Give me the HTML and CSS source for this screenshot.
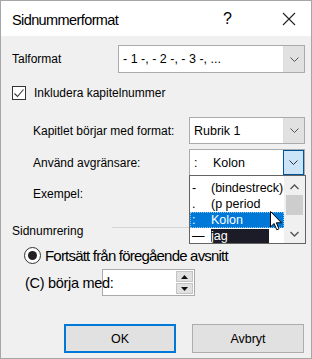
FILE: index.html
```html
<!DOCTYPE html>
<html lang="sv">
<head>
    <meta charset="UTF-8">
    <title>Sidnummerformat</title>
    <link rel="stylesheet" href="styles.css">
</head>
<body>
    <div class="dialog">
        <div class="titlebar">
            <span class="title">Sidnummerformat</span>
            <span class="help">?</span>
            <svg class="close" width="14" height="14" viewBox="0 0 14 14"><path d="M1 1 L13 13 M13 1 L1 13" stroke="#222" stroke-width="1.1" fill="none"/></svg>
        </div>

        <div class="content">
            <div class="row row-talformat">
                <span class="label">Talformat</span>
                <div class="combo wide">
                    <span class="combo-text">- 1 -, - 2 -, - 3 -, ...</span>
                    <span class="combo-btn"><svg width="9" height="5" viewBox="0 0 9 5"><path d="M0.5 0.5 L4.5 4.5 L8.5 0.5" stroke="#555" fill="none"/></svg></span>
                </div>
            </div>

            <div class="row row-check">
                <span class="checkbox"><svg width="12" height="12" viewBox="0 0 12 12"><path d="M1.5 6.5 L4.5 9.5 L10.5 2.5" stroke="#333" stroke-width="1.1" fill="none"/></svg></span>
                <span class="label">Inkludera kapitelnummer</span>
            </div>

            <div class="row row-kapitel indent">
                <span class="label">Kapitlet börjar med format:</span>
                <div class="combo narrow">
                    <span class="combo-text">Rubrik 1</span>
                    <span class="combo-btn"><svg width="9" height="5" viewBox="0 0 9 5"><path d="M0.5 0.5 L4.5 4.5 L8.5 0.5" stroke="#555" fill="none"/></svg></span>
                </div>
            </div>

            <div class="row row-sep indent">
                <span class="label">Använd avgränsare:</span>
                <div class="combo narrow open">
                    <span class="combo-text"><span class="sym">:</span>Kolon</span>
                    <span class="combo-btn active"><svg width="9" height="5" viewBox="0 0 9 5"><path d="M0.5 0.5 L4.5 4.5 L8.5 0.5" stroke="#333" fill="none"/></svg></span>
                </div>
            </div>

            <div class="row row-exempel indent">
                <span class="label">Exempel:</span>
            </div>

            <div class="group-head">
                <span class="label">Sidnumrering</span>
                <span class="group-line"></span>
            </div>

            <div class="row row-radio">
                <span class="radio"><span class="dot"></span></span>
                <span class="big">Fortsätt från föregående avsnitt</span>
            </div>

            <div class="row row-start">
                <span class="mid">(C) börja med:</span>
                <div class="spin">
                    <span class="spin-field"></span>
                    <span class="spin-btns">
                        <span class="spin-btn"><svg width="7" height="4" viewBox="0 0 7 4"><path d="M0 4 L3.5 0 L7 4 Z" fill="#111"/></svg></span>
                        <span class="spin-btn"><svg width="7" height="4" viewBox="0 0 7 4"><path d="M0 0 L3.5 4 L7 0 Z" fill="#111"/></svg></span>
                    </span>
                </div>
            </div>

            <div class="buttons">
                <span class="btn default">OK</span>
                <span class="btn">Avbryt</span>
            </div>
        </div>

        <!-- open list of the separator combo, drawn over the form -->
        <div class="droplist">
            <div class="items">
                <div class="item"><span class="sym">-</span>(bindestreck)</div>
                <div class="item"><span class="sym">.</span>(p period</div>
                <div class="item selected"><span class="sym">:</span>Kolon</div>
                <div class="item"><span class="sym">—</span><span class="mark">jag</span></div>
            </div>
            <div class="scrollbar">
                <svg class="arrow" width="9" height="6" viewBox="0 0 9 6"><path d="M0.5 5 L4.5 1 L8.5 5" stroke="#555" stroke-width="1.4" fill="none"/></svg>
                <span class="thumb"></span>
                <svg class="arrow" width="9" height="6" viewBox="0 0 9 6"><path d="M0.5 1 L4.5 5 L8.5 1" stroke="#555" stroke-width="1.4" fill="none"/></svg>
            </div>
        </div>

        <svg class="cursor" width="13" height="20" viewBox="0 0 13 20"><path d="M0.5 0.5 L0.5 16 L4 12.5 L6.8 18.8 L9 17.8 L6.3 11.8 L11.5 11.8 Z" fill="#fff" stroke="#000" stroke-width="1"/></svg>
    </div>
</body>
</html>
```

FILE: styles.css
```css
* { box-sizing: border-box; }
body { margin: 0; background: #fff; font-family: "Liberation Sans", Arial, sans-serif; font-size: 12px; color: #000; }

.dialog { position: relative; width: 312px; height: 359px; border: 1px solid #a6a6a6; background: #f0f0f0; overflow: hidden; }

.titlebar { height: 35px; background: #fff; display: flex; align-items: center; padding: 0 0 0 11px; }
.title { font-size: 14.5px; letter-spacing: -0.6px; flex: 1; padding-top: 2px; }
.help { font-size: 16px; width: 18px; margin-right: 41px; padding-top: 1px; }
.close { margin-right: 15px; }

.content { padding: 9px 6px 0 11px; }
.row { display: flex; align-items: center; }
.indent { padding-left: 21px; }
.label { white-space: nowrap; }

.combo { display: flex; height: 28px; background: #fff; border: 1px solid #aaa; }
.combo.wide { width: 187px; margin-left: auto; }
.combo.narrow { width: 116px; height: 27px; margin-left: auto; }
.combo-text { flex: 1; display: flex; align-items: center; padding-left: 4px; font-size: 12.5px; }
.combo-btn { width: 21px; background: #e1e1e1; border-left: 1px solid #ddd; display: flex; align-items: center; justify-content: center; }
.combo-btn.active { background: #cce4f7; border: 1px solid #005499; }
.sym { display: inline-block; width: 19px; }

.row-talformat { height: 28px; }
.row-check { margin-top: 13px; height: 14px; }
.checkbox { width: 14px; height: 14px; border: 1px solid #333; background: #fff; display: flex; align-items: center; justify-content: center; margin: 0 8px 0 0; }
.row-kapitel { margin-top: 17px; height: 27px; }
.row-sep { margin-top: 5px; height: 27px; }
.row-exempel { margin-top: 10px; height: 16px; }

.group-head { display: flex; align-items: center; margin-top: 22px; height: 14px; }
.group-line { flex: 1; margin-left: 29px; border-top: 1px solid #d4d4d4; margin-top: -8px; }

.row-radio { margin-top: 7px; height: 20px; padding-left: 12px; }
.radio { width: 17px; height: 17px; border: 1px solid #333; border-radius: 50%; background: #fff; display: flex; align-items: center; justify-content: center; margin-right: 4px; }
.dot { width: 9px; height: 9px; border-radius: 50%; background: #222; }
.big { font-size: 15px; letter-spacing: -0.8px; white-space: nowrap; }

.row-start { margin-top: 4px; height: 27px; padding-left: 13px; }
.mid { position: relative; z-index: 1; font-size: 14.5px; letter-spacing: -0.3px; white-space: nowrap; margin-right: -11px; }
.spin { display: flex; width: 93px; height: 27px; background: #fff; border: 1px solid #aaa; }
.spin-field { flex: 1; }
.spin-btns { width: 19px; display: flex; flex-direction: column; gap: 1px; padding: 1px; }
.spin-btn { flex: 1; background: #e1e1e1; border: 1px solid #c4c4c4; display: flex; align-items: center; justify-content: center; }

.buttons { display: flex; justify-content: flex-end; gap: 16px; margin-top: 28px; padding-right: 1px; }
.btn { width: 112px; height: 29px; background: #e1e1e1; border: 1px solid #adadad; display: flex; align-items: center; justify-content: center; font-size: 12.5px; }
.btn.default { border: 2px solid #0078d7; }

.droplist { position: absolute; left: 188px; top: 174px; width: 117px; height: 69px; background: #fff; border: 1px solid #646464; display: flex; }
.items { flex: 1; padding-top: 4px; }
.item { height: 16px; display: flex; align-items: center; padding-left: 2px; font-size: 12.5px; white-space: nowrap; }
.item.selected { background: #0078d7; color: #fff; outline: 1px dotted #8cc4f0; outline-offset: -1px; }
.mark { background: #1c1c28; color: #fff; width: 58px; }
.scrollbar { width: 21px; background: #f0f0f0; display: flex; flex-direction: column; align-items: center; padding: 8px 0 6px; }
.thumb { width: 17px; height: 20px; background: #cdcdcd; margin: 5px 0 auto; }

.cursor { position: absolute; left: 269px; top: 210px; }
```
